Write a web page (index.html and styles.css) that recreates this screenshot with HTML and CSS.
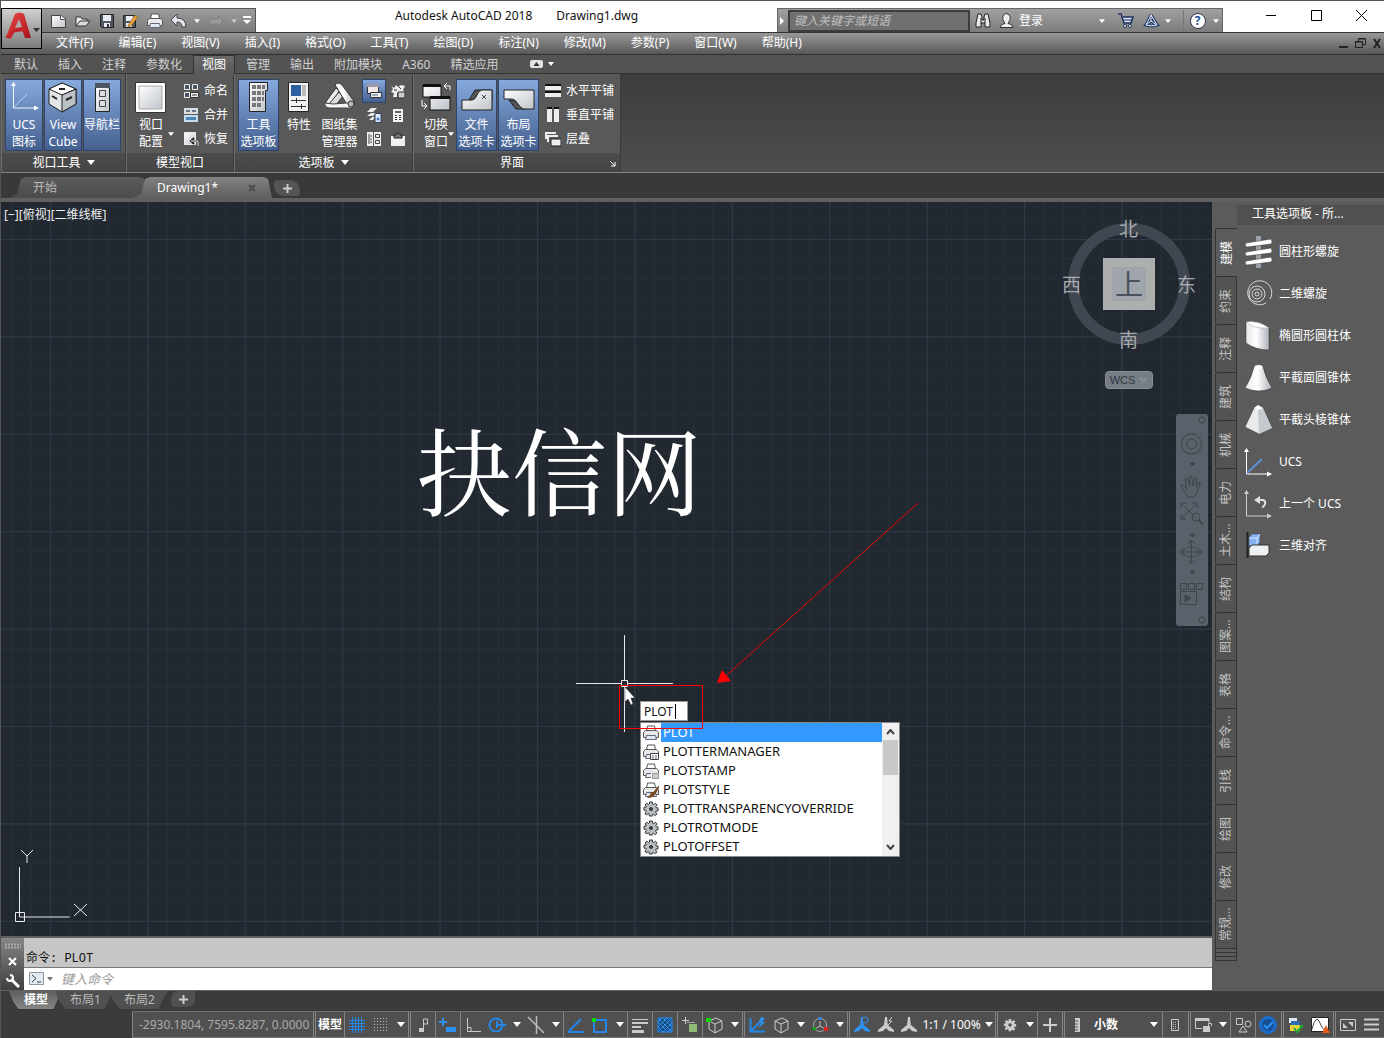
FILE: index.html
```html
<!DOCTYPE html>
<html lang="zh-CN">
<head>
<meta charset="utf-8">
<title>Autodesk AutoCAD 2018 - Drawing1.dwg</title>
<link rel="stylesheet" href="styles.css">
</head>
<body>
<svg class="defs" aria-hidden="true">
  <defs>
    <linearGradient id="paper" x1="0" y1="0" x2="1" y2="1"><stop offset="0" stop-color="#fff"/><stop offset="1" stop-color="#bfc4ca"/></linearGradient>
    <linearGradient id="round" x1="0" x2="1"><stop offset="0" stop-color="#e4e6ea"/><stop offset=".45" stop-color="#fff"/><stop offset="1" stop-color="#aeb3ba"/></linearGradient>
    <linearGradient id="red" x1="0" y1="0" x2="1" y2="1"><stop offset="0" stop-color="#ef4a45"/><stop offset="1" stop-color="#a5121a"/></linearGradient>
    <symbol id="down" viewBox="0 0 8 5"><path d="M0 0h8L4 5z" fill="currentColor"/></symbol>
    <symbol id="gear" viewBox="0 0 16 16"><path d="M6.500 1h3v2l1.300.6 1.600-1.400 1.800 1.800-1.400 1.600.6 1.300H15v3h-1.800l-.6 1.300 1.400 1.700-1.800 1.700-1.600-1.300-1.300.6V15h-3v-1.800l-1.200-.5-1.700 1.300L2 12.200l1.300-1.600-.6-1.400H1v-3h1.800l.5-1.200L2 4l1.800-1.800 1.600 1.300L6.500 3z"/></symbol>
    <symbol id="printer" viewBox="0 0 16 16"><path d="M3.500 6l1-5h7l1 5z" fill="#fff" stroke="#555"/><path d="M.5 7.500l2-2h11l2 2v5H.5z" fill="#e6e8ea" stroke="#555"/><path d="M3.500 10.500h9l1 4h-11z" fill="#dfeaf6" stroke="#667"/></symbol>
    <symbol id="annot" viewBox="0 0 18 18"><path d="M8 1l2 0 .8 8L17 14v2l-5-1-3-3-3 3-5 1v-2l6-5z" fill="currentColor"/></symbol>
    <symbol id="cube" viewBox="0 0 18 18"><path d="M3 5l7-3 6 3v8l-7 4-6-4zM3 5l6 3 7-3M9 8v9" fill="none" stroke="currentColor"/></symbol>
  </defs>
</svg>

<header class="header">
  <button class="app-button" aria-label="应用程序菜单">
    <svg width="39" height="38" viewBox="0 0 39 38"><path d="M4 27L13 4q4-3 9 0l7 24h-6l-3-8-8 1-3 8z" fill="url(#red)"/><path d="M17 9l3 8-7 1z" fill="#adadad"/><path d="M3 28l9-9 11-2 2 4-12 1-5 6z" fill="#c3222b"/><path d="M31 18h7l-3.500 4z" fill="#333"/></svg>
  </button>
  <div class="title-row">
    <div class="quick">
      <button aria-label="新建"><svg width="18" height="16"><path d="M1.500 2.500h9l5 3v9h-14z" fill="url(#paper)" stroke="#444"/><path d="M10.500 2.500v4h5" fill="#fff" stroke="#555"/></svg></button>
      <button aria-label="打开"><svg width="18" height="16"><path d="M2 13V4h5l1 2h5v2" fill="#eee" stroke="#333"/><path d="M2 13l4-5h10l-4 5z" fill="#d9dcdf" stroke="#333"/></svg></button>
      <button aria-label="保存"><svg width="16" height="16"><path d="M1.500 1.500h13v13h-12l-1-1z" fill="#4d5663" stroke="#222"/><path d="M4 2h8v6H4zM5 10h6v4H5z" fill="#e9edf2"/><path d="M8 11h2v3H8z" fill="#333"/></svg></button>
      <button aria-label="另存为"><svg width="17" height="16"><path d="M1.500 2.500h12v12h-12z" fill="#4d5663" stroke="#222"/><path d="M4 3h7v5H4zM4 10h6v4H4z" fill="#e9edf2"/><path d="M6 12l7-10 3 2-7 9-3 1z" fill="#e9a23b" stroke="#6a4818" stroke-width=".5"/></svg></button>
      <button aria-label="打印"><svg width="16" height="16"><use href="#printer"/></svg></button>
      <button aria-label="放弃"><svg width="18" height="16"><path d="M1 7l6-6v4q9 0 9 9h-4q0-5-5-5v4z" fill="#e2e6ec" stroke="#444"/></svg></button>
      <button class="mini" aria-label="放弃列表"><svg width="6" height="4"><use href="#down"/></svg></button>
      <button aria-label="重做"><svg width="18" height="16"><path d="M16 8l-5-5v3H2v5h9v3z" fill="#999" stroke="#7c7c7c"/></svg></button>
      <button class="mini dim" aria-label="重做列表"><svg width="6" height="4"><use href="#down"/></svg></button>
      <button class="mini" aria-label="自定义"><svg width="10" height="9"><path d="M1 0h8v2H1zM1 4h8L5 8z" fill="#fff"/></svg></button>
    </div>
    <h1 class="title"><span>Autodesk AutoCAD 2018</span><span>Drawing1.dwg</span></h1>
    <div class="info">
      <button class="info-toggle" aria-label="折叠"><svg width="5" height="8"><path d="M0 0l4 4-4 4z" fill="#fff"/></svg></button>
      <input class="search" type="text" placeholder="键入关键字或短语" aria-label="搜索">
      <button class="tool" aria-label="查找"><svg width="16" height="17"><path d="M3 2h3l1 3v3h2V5l1-3h3l2 9v4h-5v-4H6v4H1v-4z" fill="#e8e8e8" stroke="#222"/><path d="M6 6v5M10 6v5" stroke="#222"/></svg></button>
      <button class="login"><svg width="15" height="17"><path d="M1 15.500q1-4 5-4l-1-2Q3 8 4 4q3-5 7 0 1 4-1 5.500l-1 2q4 0 5 4z" fill="#eee" stroke="#333"/></svg>登录<svg class="push" width="6" height="4"><use href="#down"/></svg></button>
      <button class="tool" aria-label="应用商店"><svg width="18" height="17"><path d="M1 2h3l3 9h7l2-6H6" fill="#d9e2f1" stroke="#1d2f5c" stroke-width="1.500"/><path d="M7 8h8" stroke="#1d2f5c"/><circle cx="8" cy="14" r="1.500" fill="#fff" stroke="#1d2f5c"/><circle cx="13" cy="14" r="1.500" fill="#fff" stroke="#1d2f5c"/></svg></button>
      <button class="tool" aria-label="保持连接"><svg width="17" height="17"><path d="M8 3v6l-5 4q5 2 11 0L8 9M8 3L3 13M8 3l6 10" fill="none" stroke="#24396d" stroke-width="3"/><path d="M8 3v6l-5 4q5 2 11 0L8 9M8 3L3 13M8 3l6 10" fill="none" stroke="#e5ebf6"/></svg></button>
      <button class="mini" aria-label="连接菜单"><svg width="6" height="4"><use href="#down"/></svg></button>
      <button class="help" aria-label="帮助"><span>?</span></button>
      <button class="mini" aria-label="帮助菜单"><svg width="6" height="4"><use href="#down"/></svg></button>
    </div>
    <div class="window-controls">
      <button aria-label="最小化"><svg width="11" height="11"><path d="M0 5.500h10" stroke="#000"/></svg></button>
      <button aria-label="最大化"><svg width="11" height="11"><path d="M.5.5h10v10H.5z" fill="none" stroke="#000"/></svg></button>
      <button aria-label="关闭"><svg width="11" height="11"><path d="M0 0l11 11M11 0L0 11" stroke="#000"/></svg></button>
    </div>
  </div>
  <nav class="menubar">
    <a href="#">文件(F)</a><a href="#">编辑(E)</a><a href="#">视图(V)</a><a href="#">插入(I)</a><a href="#">格式(O)</a><a href="#">工具(T)</a><a href="#">绘图(D)</a><a href="#">标注(N)</a><a href="#">修改(M)</a><a href="#">参数(P)</a><a href="#">窗口(W)</a><a href="#">帮助(H)</a>
    <div class="doc-controls">
      <button aria-label="最小化图形"><svg width="10" height="11"><path d="M0 8h9v2H0z" fill="#222"/></svg></button>
      <button aria-label="还原图形"><svg width="12" height="11"><path d="M3.500 3V.5h7v6H8M.5 3.500h7v6h-7z" fill="none" stroke="#222"/><path d="M3 1h8M0 4h8" stroke="#222"/></svg></button>
      <button aria-label="关闭图形"><svg width="9" height="11"><path d="M1 1l6 9M7 1l-6 9" stroke="#222" stroke-width="2"/></svg></button>
    </div>
  </nav>
</header>

<nav class="ribbon-tabs">
  <a href="#">默认</a><a href="#">插入</a><a href="#">注释</a><a href="#">参数化</a><a href="#" class="active">视图</a><a href="#">管理</a><a href="#">输出</a><a href="#">附加模块</a><a href="#">A360</a><a href="#">精选应用</a>
  <button class="ribbon-min" aria-label="最小化功能区"><svg width="24" height="8"><rect width="13" height="8" rx="2" fill="#e4e4e4"/><path d="M3.500 6h6l-3-4z" fill="#333"/><path d="M18 2h6l-3 4z" fill="#fff"/></svg></button>
</nav>

<section class="ribbon">
  <div class="panel">
    <div class="panel-body">
      <button class="big on"><svg width="32" height="32"><path d="M5.500 3v24h22" fill="none" stroke="#eef3fb"/><path d="M6 26l13-13" stroke="#b5cdf0"/><path d="M3 5l2.500-4L8 5zM26 24.500l5 2.500-5 2.500z" fill="#fff"/></svg><span>UCS<br>图标</span></button>
      <button class="big on"><svg width="32" height="32"><path d="M2 8l13-6 14 6v15l-14 8-13-8z" fill="#e4e6e8" stroke="#222"/><path d="M2 8l13 6 14-6-14-6z" fill="#fff" stroke="#222"/><path d="M15 14v17l14-8V8z" fill="#bcc1c7" stroke="#222"/><path d="M12 8l6 0M5 15l5 3M19 19l6-3" stroke="#222" stroke-width="2"/></svg><span>View<br>Cube</span></button>
      <button class="big on"><svg width="32" height="32"><path d="M9.500 2.500h14v28h-14z" fill="url(#paper)" stroke="#222"/><path d="M9 2h15v5H9z" fill="#4b5563"/><path d="M13.500 9.500h6v6h-6zM13.500 19.500h6v6h-6z" fill="#dcdfe3" stroke="#444"/></svg><span>导航栏</span></button>
    </div>
    <h2>视口工具 <svg width="8" height="5"><use href="#down"/></svg></h2>
  </div>
  <div class="panel">
    <div class="panel-body roomy">
      <button class="big wide drop"><svg width="32" height="32"><path d="M.5 1.500h30v30H.5z" fill="#fff" stroke="#333"/><path d="M4 5h23v23H4z" fill="url(#paper)" stroke="#aaa"/></svg><span>视口<br>配置</span><svg class="corner" width="6" height="4"><use href="#down"/></svg></button>
      <div class="stack">
        <button><svg width="16" height="16"><path d="M1.500 1.500h5v5h-5zM9.500 1.500h5v5h-5zM1.500 9.500h5v5h-5z" fill="#456" stroke="#eee"/><path d="M7.500 9.500h8v5h-8z" fill="#eee" stroke="#333"/><path d="M9 12h5" stroke="#333"/></svg>命名</button>
        <button><svg width="16" height="16"><path d="M1 1h14v6H1z" fill="#ddd"/><path d="M3 3h4v2H3zM9 3h4v2H9z" fill="#678"/><path d="M1 8h14v7H1z" fill="#c4dcef"/><path d="M3 11.500h10" stroke="#4e86b5" stroke-width="3"/></svg>合并</button>
        <button><svg width="16" height="16"><path d="M1.500 1.500h11v12h-11z" fill="url(#paper)" stroke="#eee"/><path d="M15 15v-5H8m3-3l-3 3 3 3" fill="none" stroke="#222" stroke-width="2"/><path d="M15 15v-5H8" fill="none" stroke="#fff"/></svg>恢复</button>
      </div>
    </div>
    <h2>模型视口</h2>
  </div>
  <div class="panel">
    <div class="panel-body">
      <button class="big wide on"><svg width="32" height="32"><path d="M6.500 1.500h18v8h-2v21h-16z" fill="url(#paper)" stroke="#222"/><path d="M9 4h4v4H9zM14 4h4v4h-4zM19 4h3v4h-3zM9 10h4v4H9zM14 10h4v4h-4zM9 16h4v4H9zM14 16h4v4h-4zM9 22h4v4H9zM14 22h4v4h-4zM19 10h2v4h-2zM19 16h2v4h-2z" fill="#777"/></svg><span>工具<br>选项板</span></button>
      <button class="big"><svg width="32" height="32"><path d="M5.500 1.500h20v29h-20z" fill="#f1f2f3" stroke="#222"/><path d="M8 4h10v11H8z" fill="#2d5e9e"/><path d="M19 4h4v11h-4z" fill="#bbb"/><path d="M8 19.500h15M8 25.500h15M13.500 17v5M18.500 23v5" stroke="#333"/></svg><span>特性</span></button>
      <button class="big wide"><svg width="32" height="32"><path d="M1 22l11-15 3 3-7 13z" fill="#e8eaec" stroke="#333"/><path d="M5 23l10-12 4 4-7 9z" fill="#d9dcdf" stroke="#333"/><path d="M11 4q3-4 7 0l12 16q1 6-6 5z" fill="url(#round)" stroke="#333"/><path d="M1 22l8 1 14-1q6 0 5 5H5q-5-1-4-5z" fill="#f4f4f4" stroke="#444"/><circle cx="27" cy="23" r="3" fill="#bbb" stroke="#333"/></svg><span>图纸集<br>管理器</span></button>
      <div class="icon-grid">
        <button class="on" aria-label="命令行"><svg width="16" height="16"><path d="M1.500 1.500h11v9h-11z" fill="#f1e9e9" stroke="#333"/><path d="M1 1h12v3H1z" fill="#99a"/><path d="M4.500 9.500h11v5h-11z" fill="#e8edf4" stroke="#333"/><path d="M6 12h6" stroke="#567"/></svg></button>
        <button aria-label="标记集"><svg width="16" height="16"><path d="M1 3l3 2 2-3 2 2 3-2 4 1-2 4 2 3H7v4H3l1-4-3-1 2-3z" fill="#eee"/><path d="M4 7h3M9 4l2 2" stroke="#333"/><path d="M8 9h7v6H8z" fill="#ccc" stroke="#333"/></svg></button>
        <button aria-label="图层"><svg width="16" height="16"><path d="M1 5l4-4h6L7 5zM1 9l4-3h5L7 9zM3 13l3-3h3l-2 3z" fill="#eee"/><path d="M9 6.500h6v9H9z" fill="#dceaff" stroke="#345"/><circle cx="12" cy="12" r="1.500" fill="#3977c8"/></svg></button>
        <button aria-label="快速计算器"><svg width="16" height="16"><path d="M3 2h10v13H3z" fill="#f3f3f3"/><path d="M5 4h6v2H5z" fill="#567"/><path d="M5 8h2v1H5zM9 8h2v1H9zM5 10h2v1H5zM9 10h2v1H9zM5 12h2v1H5zM9 12h2v1H9z" fill="#333"/></svg></button>
        <button aria-label="设计中心"><svg width="16" height="16"><path d="M1 1h6v14H1zM8 1h7v14H8z" fill="#eee"/><path d="M3 3v10M4 5h2M4 8h2M4 11h2M9.500 3.500h4v3h-4zM9.500 9.500h4v3h-4z" stroke="#444" fill="none"/></svg></button>
        <button aria-label="外部参照"><svg width="16" height="16"><path d="M1 5h14v10H1z" fill="#f0f0f0"/><path d="M4 7V4h2q2-4 4 0h2v3z" fill="#777" stroke="#222"/></svg></button>
      </div>
    </div>
    <h2>选项板 <svg width="8" height="5"><use href="#down"/></svg></h2>
  </div>
  <div class="panel windows">
    <div class="panel-body">
      <button class="big drop"><svg width="32" height="32"><path d="M3 4h18v12H3zM10 16h20v13H10z" fill="url(#paper)" stroke="#111"/><path d="M3 3h18v3H3zM10 15h20v3H10z" fill="#111"/><path d="M30 9V5h-6m3-3l-3 3 3 3M2 19v6h5m-3-3l3 3-3 3" fill="none" stroke="#fff"/></svg><span>切换<br>窗口</span><svg class="corner" width="6" height="4"><use href="#down"/></svg></button>
      <button class="big wide on"><svg width="32" height="32"><path d="M8 19l6-10h17v11z" fill="#555" stroke="#222"/><path d="M1 29V19h10q3 0 5-5t5-5h10v20z" fill="url(#paper)" stroke="#222"/><path d="M21 14l4 4M25 14l-4 4" stroke="#444"/></svg><span>文件<br>选项卡</span></button>
      <button class="big wide on"><svg width="32" height="32"><path d="M6 19l7 9h10l-4-6z" fill="#555" stroke="#222"/><path d="M1 9h30v19H21q-3 0-6-5t-6-5H1z" fill="url(#paper)" stroke="#222"/></svg><span>布局<br>选项卡</span></button>
      <div class="stack">
        <button><svg width="16" height="16"><path d="M0 2h16v5H0zM0 9h16v5H0z" fill="#eee"/><path d="M0 1h16v2H0zM0 8h16v2H0z" fill="#111"/></svg>水平平铺</button>
        <button><svg width="16" height="16"><path d="M2 1h5v14H2zM9 1h5v14H9z" fill="#eee"/><path d="M2 0h5v2H2zM9 0h5v2H9z" fill="#111"/></svg>垂直平铺</button>
        <button><svg width="16" height="16"><path d="M1 8V2h10M3 11V5h10" fill="none" stroke="#eee" stroke-width="2"/><path d="M6 8h10v7H6z" fill="#eee" stroke="#222"/></svg>层叠</button>
      </div>
    </div>
    <h2 class="with-launcher">界面<button aria-label="选项"><svg width="6" height="6"><path d="M0 0l5 5M5 1v4H1" stroke="#fff" fill="none"/></svg></button></h2>
  </div>
</section>

<nav class="file-tabs">
  <a href="#" class="file-tab">开始</a>
  <a href="#" class="file-tab active">Drawing1*<svg width="8" height="8"><path d="M1 1l6 6M7 1L1 7" stroke="#4a4a4a" stroke-width="2"/></svg></a>
  <button class="add-tab" aria-label="新图形"><svg width="9" height="9"><path d="M4.500 0v9M0 4.500h9" stroke="#ccc" stroke-width="2"/></svg></button>
</nav>

<main class="workspace">
  <div class="drawing-side">
    <section class="canvas">
      <svg class="grid-lines" aria-hidden="true">
        <defs>
          <pattern id="minor" width="19.480" height="19.480" patternUnits="userSpaceOnUse" x="49" y="37"><path d="M.5 0v20M0 .5h20" stroke="#262e39"/></pattern>
          <pattern id="major" width="97.400" height="97.400" patternUnits="userSpaceOnUse" x="49" y="37"><path d="M.5 0v98M0 .5h98" stroke="#2f3a48"/></pattern>
        </defs>
        <rect width="100%" height="100%" fill="url(#minor)"/><rect width="100%" height="100%" fill="url(#major)"/>
      </svg>
      <div class="view-label">[−][俯视][二维线框]</div>
      <div class="drawn-text">抉信网</div>

      <div class="viewcube">
        <span class="north">北</span><span class="west">西</span><button class="face">上</button><span class="east">东</span><span class="south">南</span>
      </div>
      <button class="wcs">WCS <svg width="9" height="5"><path d="M1 0h7L4.500 4z" fill="none" stroke="#9ba1a8"/></svg></button>
      <div class="navbar">
        <svg width="32" height="212" fill="none" stroke="#3e444c"><circle cx="26" cy="6" r="3"/><path d="M5.500 19.500h20v20h-20z" stroke="#555b64"/><circle cx="15.500" cy="30" r="10"/><circle cx="15.500" cy="30" r="5"/><path d="M14 49h5l-2.500 3z" fill="#3e444c"/><path d="M10 80l-5-8q1-2 4 0l2 3-2-10q2-2 3 1l2 6-1-9q2-2 3 0l1 9 2-8q2-1 2 1l-1 8 3-5q2 0 1 2l-3 8q-2 5-5 5h-4z"/><path d="M6 90l14 14M20 90L6 104M5 94v-5h5M16 89h5v5M5 100v5h5"/><circle cx="20" cy="103" r="4"/><path d="M23 106l4 5" stroke-width="2"/><path d="M14 120h5l-2.500 3z" fill="#3e444c"/><path d="M15.500 127v22M5 138h22M12 130l3.500-4 3.500 4M12 146l3.500 4 3.500-4M8 134l-4 4 4 4M23 134l4 4-4 4"/><ellipse cx="15.500" cy="138" rx="8" ry="5"/><path d="M14 157h5l-2.500 3z" fill="#3e444c"/><path d="M4.500 169.500h6v6h-6zM12.500 169.500h6v6h-6zM20.500 169.500h6v6h-6zM4.500 177.500h16v13h-16z"/><path d="M9 181l6 3-6 4z" fill="#3e444c"/><circle cx="26" cy="206" r="3"/></svg>
      </div>

      <svg class="ucs" width="90" height="80" fill="none" stroke="#e8eaec"><path d="M18.500 20v50h50M14.500 65.500h9v9h-9z"/><path d="M20 3l6 6 6-6M26 9v7M73 57l13 12M86 57L73 69"/></svg>

      <svg class="crosshair" width="98" height="98" stroke="#e6e8ea" fill="none"><path d="M48.500 0v45M48.500 52v45M0 48.500h45M52 48.500h45M45.500 45.500h6v6h-6z"/></svg>
      <div class="dynamic">
        <input class="dynamic-input" type="text" value="PLOT" aria-label="动态输入"><i class="caret"></i>
        <div class="suggest">
          <ul>
            <li class="selected"><svg width="16" height="16"><use href="#printer"/></svg><span>PLOT</span></li>
            <li><svg width="16" height="16"><use href="#printer"/><path d="M7.500 9.500h8v6h-8z" fill="#fff" stroke="#444"/><path d="M9 12h2M12 12h2M9 14h2M12 14h2" stroke="#557"/></svg><span>PLOTTERMANAGER</span></li>
            <li><svg width="16" height="16"><use href="#printer"/><path d="M8 10h8v6H8z" fill="#fff"/><path d="M9.500 10.500h6v5h-6z" fill="#ccc" stroke="#555" stroke-dasharray="1 1"/></svg><span>PLOTSTAMP</span></li>
            <li><svg width="16" height="16"><use href="#printer"/><path d="M16 4l-6 7 2 1z" stroke="#5c3712" fill="#8b5a2b"/><path d="M10 10q-3 0-3 3l-3 3q7 0 8-4z" fill="#7b4a20"/></svg><span>PLOTSTYLE</span></li>
            <li><svg width="16" height="16" fill="#b8bdc2" stroke="#333"><use href="#gear"/><circle cx="8" cy="8" r="1.500" fill="#444"/></svg><span>PLOTTRANSPARENCYOVERRIDE</span></li>
            <li><svg width="16" height="16" fill="#b8bdc2" stroke="#333"><use href="#gear"/><circle cx="8" cy="8" r="1.500" fill="#444"/></svg><span>PLOTROTMODE</span></li>
            <li><svg width="16" height="16" fill="#b8bdc2" stroke="#333"><use href="#gear"/><circle cx="8" cy="8" r="1.500" fill="#444"/></svg><span>PLOTOFFSET</span></li>
          </ul>
          <div class="scroll"><svg width="9" height="6"><path d="M1 5l3.500-4L8 5" fill="none" stroke="#444" stroke-width="2"/></svg><i></i><svg width="9" height="6"><path d="M1 1l3.500 4L8 1" fill="none" stroke="#444" stroke-width="2"/></svg></div>
        </div>
      </div>
      <div class="mark"></div>
      <svg class="pointer" width="12" height="19"><path d="M1 1v15l3-3 3 6 2-1-2-6h4z" fill="#fff" stroke="#222" stroke-width=".5"/></svg>
      <svg class="arrow" width="202" height="182"><path d="M201 0L10 172" stroke="#f00000" fill="none"/><path d="M0 180L5 167 14 178z" fill="#f00"/></svg>
    </section>

    <section class="command">
      <div class="command-grip">
        <svg width="16" height="6"><path d="M0 1.500h16M0 4.500h16" stroke="#aaa" stroke-width="2" stroke-dasharray="2 1"/></svg>
        <button aria-label="关闭命令行"><svg width="9" height="9"><path d="M1 1l7 7M8 1L1 8" stroke="#fff" stroke-width="2"/></svg></button>
        <button aria-label="自定义命令行"><svg width="14" height="14"><path d="M5 5l8 8" stroke="#fff" stroke-width="3"/><path d="M4 1q3 0 3 3T4 7 1 4" fill="none" stroke="#fff" stroke-width="2"/></svg></button>
      </div>
      <div class="command-text">
        <div class="history">命令: PLOT</div>
        <div class="prompt">
          <button aria-label="最近使用的命令"><svg width="24" height="14"><path d="M.5.500h14v12H.5z" fill="#e2e9ef" stroke="#8b98a5"/><path d="M3 3l4 3.500L3 10M8 10h4" fill="none" stroke="#345"/><path d="M18 5h6l-3 4z" fill="#777"/></svg></button>
          <input type="text" placeholder="键入命令" aria-label="命令">
        </div>
      </div>
    </section>
  </div>

  <aside class="palette">
    <div class="palette-tabs">
      <button class="active">建模</button><button>约束</button><button>注释</button><button>建筑</button><button>机械</button><button>电力</button><button>土木...</button><button>结构</button><button>图案...</button><button>表格</button><button>命令...</button><button>引线</button><button>绘图</button><button>修改</button><button>常规...</button>
      <i></i><i></i><i></i>
    </div>
    <div class="palette-content">
      <h2>工具选项板 - 所...</h2>
      <button><svg width="30" height="34"><path d="M12 1h5v32h-5z" fill="#9ca2a9"/><path d="M2 8l25-4q2 3 0 5L3 12q-3-1-1-4zM2 17l25-4q2 3 0 5L3 21q-3-1-1-4zM2 26l25-4q2 3 0 5L3 30q-3-1-1-4z" fill="#fff" stroke="#333" stroke-width=".5"/></svg>圆柱形螺旋</button>
      <button><svg width="30" height="32" fill="none" stroke="#d5d8dc"><circle cx="13" cy="16" r="2"/><circle cx="13" cy="16" r="5"/><circle cx="13" cy="16" r="8"/><path d="M22 25A12 12 0 1 1 26 21"/></svg>二维螺旋</button>
      <button><svg width="30" height="32"><path d="M2 2q12-2 23 6v22Q12 30 2 23z" fill="url(#round)" stroke="#333" stroke-width=".5"/><path d="M2 2q12-2 23 6Q9 9 2 2z" fill="#fff" stroke="#999" stroke-width=".5"/></svg>椭圆形圆柱体</button>
      <button><svg width="30" height="32"><path d="M10 5q4-3 9 0 3 12 9 21-13 6-27 0Q7 17 10 5z" fill="url(#round)" stroke="#333" stroke-width=".5"/><ellipse cx="14.500" cy="5" rx="4" ry="2" fill="#fff"/></svg>平截面圆锥体</button>
      <button><svg width="30" height="32"><path d="M10 4l4-3 5 3 9 20-13 6L1 23z" fill="#e8eaec" stroke="#333" stroke-width=".5"/><path d="M14 6l5-2 9 20-13 6z" fill="#c4c9d0"/><path d="M10 4l4-3 5 3-5 2z" fill="#fff"/></svg>平截头棱锥体</button>
      <button><svg width="30" height="32"><path d="M2.500 5v23h22" stroke="#fff" fill="none"/><path d="M0 6l2.500-4L5 6zM23 25.500l5 2.500-5 2.500z" fill="#fff"/><path d="M3 27l15-14" stroke="#5d8fd8" stroke-width="2"/></svg>UCS</button>
      <button><svg width="30" height="32"><path d="M2.500 5v23h22" stroke="#ccc" fill="none"/><path d="M0 6l2.500-4L5 6zM23 25.500l5 2.500-5 2.500z" fill="#ccc"/><path d="M14 12h5q3 1 2 4t-3 3" fill="none" stroke="#ddd" stroke-width="2"/><path d="M10 12l6-4v8z" fill="#ddd"/></svg>上一个 UCS</button>
      <button><svg width="30" height="32"><path d="M3.500 2v26" stroke="#222" stroke-width="2"/><path d="M5 8l3-4h8v8l-3 4H5z" fill="#86b3ef" stroke="#346" stroke-width=".5"/><path d="M5 8h8l3-4M13 8v8" fill="none" stroke="#d5e5fb"/><path d="M5 18l3-3h17v8l-3 3H5z" fill="#eef0f2" stroke="#333"/></svg>三维对齐</button>
    </div>
  </aside>
</main>

<nav class="layout-tabs">
  <a href="#" class="active">模型</a><a href="#">布局1</a><a href="#">布局2</a>
  <button aria-label="新建布局"><svg width="9" height="9"><path d="M4.500 0v9M0 4.500h9" stroke="#ccc" stroke-width="2"/></svg></button>
</nav>

<footer class="status">
  <div class="cell coords">-2930.1804, 7595.8287, 0.0000</div>
  <div class="cell"><button class="model">模型</button></div>
  <div class="cell double"><button aria-label="栅格"><svg width="18" height="18"><path d="M4.500 1v16M7.500 1v16M10.500 1v16M13.500 1v16M1 4.500h16M1 7.500h16M1 10.500h16M1 13.500h16" stroke="#2487e8"/></svg></button><button aria-label="捕捉"><svg width="18" height="18"><path d="M2 2.500h15M2 5.500h15M2 8.500h15M2 11.500h15M2 14.500h15" stroke="#bbb" stroke-dasharray="1 2"/></svg></button><button class="arr" aria-label="捕捉菜单"><svg width="8" height="5"><use href="#down"/></svg></button></div>
  <div class="cell"><button aria-label="推断约束"><svg width="18" height="18"><path d="M9.500 13V3h4v5h-4" fill="none" stroke="#ccc"/><path d="M5 12h5v4H5z" fill="#ccc"/></svg></button></div>
  <div class="cell"><button aria-label="动态输入"><svg width="18" height="18"><path d="M4 2v8M0 6h8" stroke="#2d91f0" stroke-width="2"/><path d="M7 11h10v5H7z" fill="#2d91f0"/></svg></button></div>
  <div class="cell"><button aria-label="正交"><svg width="18" height="18"><path d="M3.500 2v13.500H17M3.500 11.500H7v4" fill="none" stroke="#ccc"/></svg></button><button aria-label="极轴追踪"><svg width="18" height="18"><circle cx="8" cy="9" r="6.500" fill="none" stroke="#2487e8" stroke-width="2"/><path d="M8 9h10M9 5v7" stroke="#2487e8" stroke-width="2"/></svg></button><button class="arr" aria-label="极轴菜单"><svg width="8" height="5"><use href="#down"/></svg></button><button aria-label="等轴测"><svg width="18" height="18"><path d="M1 1l16 16M9.500 0v18" stroke="#bbb" stroke-width="1.500"/></svg></button><button class="arr" aria-label="等轴测菜单"><svg width="8" height="5"><use href="#down"/></svg></button></div>
  <div class="cell"><button aria-label="对象追踪"><svg width="18" height="18"><path d="M1 16h16M2 15L14 3" stroke="#2487e8" stroke-width="2"/></svg></button><button aria-label="对象捕捉"><svg width="18" height="18"><path d="M3 4h12v12H3z" fill="none" stroke="#2487e8" stroke-width="2"/><path d="M1 2h4v4H1z" fill="#0d0"/></svg></button><button class="arr" aria-label="对象捕捉菜单"><svg width="8" height="5"><use href="#down"/></svg></button></div>
  <div class="cell"><button aria-label="线宽"><svg width="18" height="18"><path d="M1 3.500h16" stroke="#ccc"/><path d="M1 7h16M1 11h9" stroke="#ccc" stroke-width="2"/><path d="M1 15.500h12" stroke="#ccc" stroke-width="3"/></svg></button></div>
  <div class="cell"><button aria-label="透明度"><svg width="18" height="18"><path d="M2 2h14v14H2z" fill="#174b7e" stroke="#2487e8"/><path d="M2 6l4-4M2 11l9-9M2 16L16 2M7 16l9-9M12 16l4-4M2 11l5 5M2 6l10 10M2 2l14 14M7 2l9 9M11 2l5 5" stroke="#2d91f0"/></svg></button></div>
  <div class="cell"><button aria-label="选择循环"><svg width="18" height="18"><path d="M4.500 1v7M1 4.500h7" stroke="#ccc"/><path d="M6 6.500h8" stroke="#aaa"/><path d="M8 8h8v8H8z" fill="#8dbb74"/></svg></button></div>
  <div class="cell double"><button aria-label="三维捕捉"><svg width="18" height="18"><use href="#cube"/><path d="M0 2h5v4H0z" fill="#0d0"/></svg></button><button class="arr" aria-label="三维捕捉菜单"><svg width="8" height="5"><use href="#down"/></svg></button></div>
  <div class="cell double"><button aria-label="动态 UCS"><svg width="18" height="18"><path d="M2.500 2v13.500H17M3 15l8-8" fill="none" stroke="#2487e8" stroke-width="2"/><path d="M13 1l-3 6h3l-3 6 7-7h-3l3-4z" fill="#2d91f0"/></svg></button><button aria-label="选择过滤"><svg width="18" height="18"><use href="#cube"/></svg></button><button class="arr" aria-label="过滤菜单"><svg width="8" height="5"><use href="#down"/></svg></button><button aria-label="小控件"><svg width="18" height="18"><circle cx="9" cy="9" r="6.500" fill="none" stroke="#aaa"/><path d="M9 5v5l-5 3M9 10l5 3" fill="none" stroke="#bbb"/><path d="M7.500 1h3v3h-3z" fill="#2487e8"/><path d="M1 11l5 1-3 3z" fill="#0a0"/><path d="M13 11h4v4h-4z" fill="#d22"/></svg></button><button class="arr" aria-label="小控件菜单"><svg width="8" height="5"><use href="#down"/></svg></button></div>
  <div class="cell double"><button class="blue" aria-label="注释可见性"><svg width="18" height="18"><use href="#annot"/><circle cx="12" cy="4" r="3" fill="#505050" stroke="#2d91f0"/></svg></button><button aria-label="自动缩放"><svg width="18" height="18"><use href="#annot"/><path d="M15 1l-3 4h3l-4 4" fill="none" stroke="#ccc"/></svg></button><button class="scale"><svg width="18" height="18"><use href="#annot"/></svg><span>1:1 / 100%</span><svg width="8" height="5"><use href="#down"/></svg></button></div>
  <div class="cell"><button aria-label="切换工作空间"><svg width="14" height="14" viewBox="0 0 16 16" fill="#ccc"><use href="#gear" width="16" height="16"/><circle cx="8" cy="8" r="2" fill="#505050"/></svg></button><button class="arr" aria-label="工作空间菜单"><svg width="8" height="5"><use href="#down"/></svg></button></div>
  <div class="cell double"><button aria-label="注释监视器"><svg width="14" height="14"><path d="M7 0v14M0 7h14" stroke="#ccc" stroke-width="2"/></svg></button></div>
  <div class="cell"><button class="units"><svg width="18" height="18"><path d="M7 2h5v14H7z" fill="#ccc"/><path d="M7 5h3M7 8h3M7 11h3M7 14h3" stroke="#555"/></svg><span>小数</span><svg width="8" height="5"><use href="#down"/></svg></button></div>
  <div class="cell double tail"><button aria-label="快捷特性"><svg width="18" height="18"><path d="M5.500 3.500h7v11h-7z" fill="none" stroke="#ccc"/><path d="M7 6.500h4M7 8.500h4M7 10.500h4M7 12.500h4" stroke="#bbb" stroke-dasharray="1 1"/></svg></button></div>
  <div class="cell"><button aria-label="锁定界面"><svg width="18" height="18"><path d="M15 7V2.500H1.500v10H8" fill="none" stroke="#ccc"/><path d="M1 2h14v3H1zM9 10h7v6H9z" fill="#ccc"/><path d="M14.500 10V7.500h3V10" fill="none" stroke="#ccc"/></svg></button><button class="arr" aria-label="锁定菜单"><svg width="8" height="5"><use href="#down"/></svg></button></div>
  <div class="cell"><button aria-label="隔离对象"><svg width="18" height="18" fill="none" stroke="#ccc"><path d="M2.500 2.500h6v6h-6zM5 16l4-6 4 6z"/><circle cx="14" cy="8" r="3"/></svg></button></div>
  <div class="cell double tail"><button aria-label="硬件加速"><svg width="18" height="18"><circle cx="9" cy="9" r="9" fill="#1c6ec9"/><circle cx="9" cy="9" r="6" fill="#174f95"/><path d="M5 9l3 3 6-6" fill="none" stroke="#2d91f0" stroke-width="2"/></svg></button></div>
  <div class="cell double tail"><button aria-label="受信任的图形"><svg width="18" height="18"><path d="M2 2h8v5H2z" fill="#dfe9f3"/><path d="M4 5h9v4H4z" fill="#2b6fb0"/><path d="M3 9h10v6H3z" fill="#e9d33b"/><path d="M7 12l3 4 6-7" fill="none" stroke="#1fa83a" stroke-width="2"/></svg></button><button aria-label="性能"><svg width="19" height="18"><path d="M.5 1.500h17v14H.5z" fill="#fff" stroke="#222"/><path d="M1 13Q5-3 9 7t8 6" fill="none" stroke="#444"/><path d="M15 9l4 8h-8z" fill="#e65a1c"/></svg></button></div>
  <div class="cell"><button aria-label="全屏显示"><svg width="18" height="18"><path d="M1.500 3.500h15v11h-15z" fill="none" stroke="#ccc"/><path d="M9 6h5v5zM4 7v5h5z" fill="#ccc"/></svg></button><button aria-label="自定义"><svg width="16" height="18"><path d="M0 3.500h15M0 8.500h15M0 13.500h15" stroke="#ccc" stroke-width="2"/></svg></button></div>
</footer>
</body>
</html>
```
FILE: styles.css
```css
* { box-sizing: border-box; }
body {
  margin: 0;
  min-height: 100vh;
  display: flex;
  flex-direction: column;
  background: #3b3b3b;
  color: #eee;
  font: 12px/16px "Noto Sans", "Noto Sans CJK SC", sans-serif;
  border-left: 1px solid #555;
}
button, input { font: inherit; color: inherit; }
button { margin: 0; padding: 0; border: 0; background: none; display: flex; align-items: center; justify-content: center; white-space: nowrap; }
a { color: inherit; text-decoration: none; white-space: nowrap; }
h1, h2 { margin: 0; font-size: 12px; font-weight: 400; }
svg { flex: none; }
.defs { position: absolute; width: 0; height: 0; }

/* Title and menu bar */
.header { display: grid; grid-template-columns: 41px 1fr; border-top: 1px solid #555; background: linear-gradient(to bottom, #fff 31px, #9b9b9b 31px, #585858); }
.app-button { grid-row: 1 / 3; margin: 7px 0 5px; border: 1px solid #000; background: linear-gradient(#d0d0d0, #7d7d7d); }
.title-row { display: flex; height: 31px; padding-top: 7px; background: #fff; color: #111; }
.quick { width: 214px; display: flex; align-items: center; gap: 5px; padding-left: 7px; color: #fff; background: linear-gradient(#9c9c9c, #7b7b7b); border: 1px solid #555; border-width: 1px 1px 0 0; }
.quick button { width: 19px; }
.quick .mini, .info .mini { width: 8px; color: #fff; }
.quick .dim { opacity: .5; }
.title { flex: 1; display: flex; justify-content: center; gap: 24px; white-space: nowrap; }
.info { width: 446px; display: flex; align-items: center; gap: 1px; background: linear-gradient(#a0a0a0, #7c7c7c); border: 1px solid #666; border-bottom: 0; padding-right: 2px; }
.info-toggle { width: 9px; }
.search { width: 182px; height: 22px; padding: 0 4px; border: 2px solid #3d3d3d; background: #707070; font-style: italic; }
.search::placeholder { color: #c2c2c2; opacity: 1; }
.tool { width: 24px; }
.login { flex: 1; color: #fff; gap: 5px; padding-left: 3px; }
.login .push { margin-left: auto; margin-right: 8px; }
.help { width: 28px; height: 22px; margin-left: 10px; border-left: 1px solid #777; }
.help span { width: 16px; height: 16px; border-radius: 8px; background: #fff; border: 1px solid #335; color: #1d4f9e; font-weight: 700; line-height: 14px; }
.window-controls { display: flex; margin-left: 26px; }
.window-controls button { width: 45px; padding-bottom: 10px; }
.menubar { display: flex; align-items: center; height: 22px; gap: 25px; padding: 0 0 1px 14px; color: #fff; border-top: 1px solid #333; }
.doc-controls { margin-left: auto; display: flex; gap: 6px; padding-right: 2px; }

/* Ribbon */
.ribbon-tabs { display: flex; height: 20px; padding-left: 3px; background: #535353; border-top: 1px solid #2e2e2e; border-bottom: 1px solid #333; color: #d0d0d0; }
.ribbon-tabs a { padding: 2px 10px 0; height: 19px; }
.ribbon-tabs .active { padding: 1px 8px 0; margin: 0 1px; border: 1px solid #333; border-bottom: 0; background: linear-gradient(#6a6a6a, #595959); color: #fff; }
.ribbon-min { margin-left: 22px; }
.ribbon { display: flex; height: 99px; background: linear-gradient(#3d3d3d, #4d4d4d); border-bottom: 1px solid #858585; color: #fff; }
.panel { display: flex; flex-direction: column; background: #595959; border-right: 1px solid #3b3b3b; border-left: 1px solid #6d6d6d; }
.panel-body { flex: 1; display: flex; gap: 1px; padding: 5px 2px 1px 3px; }
.panel:first-child .panel-body { padding-right: 4px; }
.panel .roomy { padding-left: 0; padding-right: 5px; }
.panel h2 { height: 19px; display: flex; align-items: center; justify-content: center; gap: 6px; background: linear-gradient(#4c4c4c, #454545); }
.panel h2.with-launcher { position: relative; padding-right: 10px; }
.with-launcher button { position: absolute; right: 4px; bottom: 5px; }
.big { position: relative; flex-direction: column; justify-content: flex-start; min-width: 38px; height: 72px; padding-top: 1px; line-height: 17px; border: 1px solid transparent; }
.big span { margin-top: 3px; }
.wide { min-width: 41px; }
.on { background: linear-gradient(#86a9dd, #44608f); border: 1px solid #2d436b; }
.wide.drop { min-width: 48px; margin-right: 3px; }
.corner { position: absolute; right: 0; bottom: 14px; }
.windows .panel-body { padding-right: 6px; }
.stack { display: flex; flex-direction: column; padding-left: 5px; }
.stack button { height: 24px; gap: 5px; justify-content: flex-start; }
.roomy .stack { padding-left: 4px; }
.icon-grid { display: grid; grid-template-columns: 24px 24px; grid-auto-rows: 24px; padding-left: 1px; }

/* File tabs */
.file-tabs { display: flex; align-items: flex-end; height: 29px; padding-left: 8px; background: linear-gradient(#393939 25px, #606060 25px); padding-bottom: 4px; }
.file-tab { display: flex; align-items: center; justify-content: space-between; width: 139px; height: 21px; padding: 0 16px 0 24px; margin-right: -15px; background: linear-gradient(#5c5c5c, #4b4b4b); color: #bbb; clip-path: polygon(0 100%, 8px 80%, 12px 10%, 17px 0, 130px 0, 135px 8%, 139px 100%); }
.file-tab.active { background: linear-gradient(#828282, #5f5f5f); color: #fff; }
.add-tab { width: 26px; height: 16px; margin: 0 0 2px 17px; background: #545454; border-radius: 4px 10px 4px 10px; }

/* Workspace */
.workspace { flex: 1; display: flex; background: #5b5b5b; }
.drawing-side { flex: 1; display: flex; flex-direction: column; min-width: 0; }
.canvas { position: relative; flex: 1; overflow: hidden; background: #212830; }
.grid-lines { position: absolute; inset: 0; width: 100%; height: 100%; }
.view-label { position: absolute; left: 3px; top: 5px; }
.drawn-text { position: absolute; left: 416px; top: 211px; color: #fff; font: 400 95px/110px "Noto Serif CJK SC", "Noto Sans CJK SC", serif; }
.viewcube { position: absolute; right: 22px; top: 21px; width: 122px; height: 122px; border: 11px solid #414750; border-radius: 50%; color: #a5a9ae; font-size: 19px; line-height: 24px; }
.viewcube span { position: absolute; }
.north { left: 40px; top: -17px; }
.south { left: 40px; bottom: -18px; }
.west { left: -17px; top: 39px; }
.east { right: -17px; top: 39px; }
.viewcube .face { position: absolute; left: 24px; top: 24px; width: 52px; height: 52px; background: #a0a5ab; border: 9px solid #adafaf; color: #4a535d; font-size: 28px; }
.wcs { position: absolute; right: 59px; top: 169px; width: 48px; height: 18px; gap: 4px; background: #777d86; border: 1px solid #8b9097; border-radius: 4px; color: #30363e; font: 11px/16px "Liberation Sans", sans-serif; }
.navbar { position: absolute; right: 4px; top: 212px; width: 32px; height: 212px; background: #5b616a; border-radius: 3px; }
.ucs { position: absolute; left: 0; bottom: 9px; }
.crosshair { position: absolute; left: 575px; top: 433px; }
.dynamic { position: absolute; left: 639px; top: 499px; width: 260px; color: #111; }
.dynamic-input { display: block; width: 48px; height: 20px; padding: 0 3px; border: 1px solid #999; background: #fff; }
.caret { position: absolute; left: 35px; top: 3px; width: 1px; height: 15px; background: #000; }
.suggest { display: flex; margin-top: 1px; background: #fff; border: 1px solid #888; font-size: 13px; }
.suggest ul { flex: 1; margin: 0; padding: 0; list-style: none; }
.suggest li { display: flex; align-items: center; height: 19px; padding-left: 2px; gap: 2px; }
.suggest li span { flex: 1; padding-left: 2px; line-height: 19px; }
.suggest .selected span { background: #3399ff; color: #fff; }
.scroll { width: 17px; display: flex; flex-direction: column; align-items: center; padding: 6px 0; background: #f0f0f0; }
.scroll i { width: 15px; height: 35px; margin: 5px 0 auto; background: #c8c8c8; }
.mark { position: absolute; left: 618px; top: 483px; width: 84px; height: 44px; border: 1px solid #f00; }
.pointer { position: absolute; left: 623px; top: 484px; }
.arrow { position: absolute; left: 716px; top: 301px; }

/* Command line */
.command { display: flex; height: 54px; border-top: 2px solid #5f5f5f; }
.command-grip { width: 23px; display: flex; flex-direction: column; align-items: center; gap: 8px; padding-top: 5px; background: linear-gradient(#858585, #404040); }
.command-text { flex: 1; background: #fff; }
.history { height: 30px; padding: 13px 2px 0; background: #c6c6c6; border-bottom: 1px solid #777; color: #111; font-family: "Liberation Mono", "Noto Sans CJK SC", monospace; }
.prompt { display: flex; height: 22px; align-items: center; padding-left: 5px; gap: 8px; }
.prompt input { flex: 1; padding: 0; border: 0; outline: 0; background: none; font-size: 13px; font-style: italic; }
.prompt input::placeholder { color: #999; opacity: 1; }

/* Tool palette */
.palette { width: 172px; display: flex; padding: 3px 0 0 3px; }
.palette-tabs { width: 22px; padding-top: 23px; }
.palette-tabs button { width: 22px; height: 48px; border: solid #333; border-width: 0 1px 1px; border-radius: 0 0 3px; background: #535353; color: #c5c5c5; writing-mode: vertical-rl; text-orientation: sideways; transform: rotate(180deg); }
.palette-tabs .active { background: #5b5b5b; color: #fff; border-left: 0; }
.palette-tabs i { display: block; height: 4px; border: 1px solid #333; border-bottom: 0; }
.palette-tabs i:last-child { height: 5px; border-bottom: 1px solid #333; }
.palette-content { flex: 1; }
.palette-content h2 { height: 20px; margin-bottom: 6px; padding-left: 15px; line-height: 18px; background: #505050; color: #fff; }
.palette-content button { height: 42px; padding-left: 7px; gap: 5px; color: #fff; }

/* Layout tabs */
.layout-tabs { display: flex; height: 21px; padding-left: 8px; border-top: 1px solid #606060; }
.layout-tabs a { height: 18px; width: 59px; padding-left: 15px; margin-right: -5px; line-height: 18px; background: #505050; color: #bbb; clip-path: polygon(0 0, 100% 0, 94% 30%, 84% 100%, 18% 100%, 8% 60%); }
.layout-tabs .active { width: 53px; margin-right: -7px; background: linear-gradient(#606060, #858585); color: #fff; font-weight: 700; }
.layout-tabs button { width: 24px; height: 16px; margin-left: 8px; background: #505050; border-radius: 8px 2px 8px 4px; }

/* Status bar */
.status { display: flex; align-self: flex-end; height: 27px; background: #505050; border-top: 1px solid #707070; border-bottom: 1px solid #777; color: #ccc; }
.cell { display: flex; align-items: center; border-right: 1px solid #858585; }
.cell:last-child { border-right: 0; }
.double { border-right-width: 3px; border-right-style: double; }
.tail { padding-right: 1px; }
.status button { width: 24px; height: 25px; }
.status .arr { width: 15px; color: #fff; }
.coords { width: 184px; padding-left: 6px; border-left: 1px solid #858585; white-space: nowrap; color: #aaa; border-right: 3px double #858585; }
.status .model { width: 28px; color: #fff; font-weight: 700; }
.status .blue { color: #2d91f0; }
.status .scale { width: 97px; gap: 4px; }
.status .units { width: 97px; justify-content: flex-start; gap: 8px; padding-left: 3px; font-weight: 700; }
.units svg:last-child { margin-left: auto; margin-right: 4px; }
.scale span, .units span, .scale svg:last-child, .units svg:last-child { color: #fff; }
```
